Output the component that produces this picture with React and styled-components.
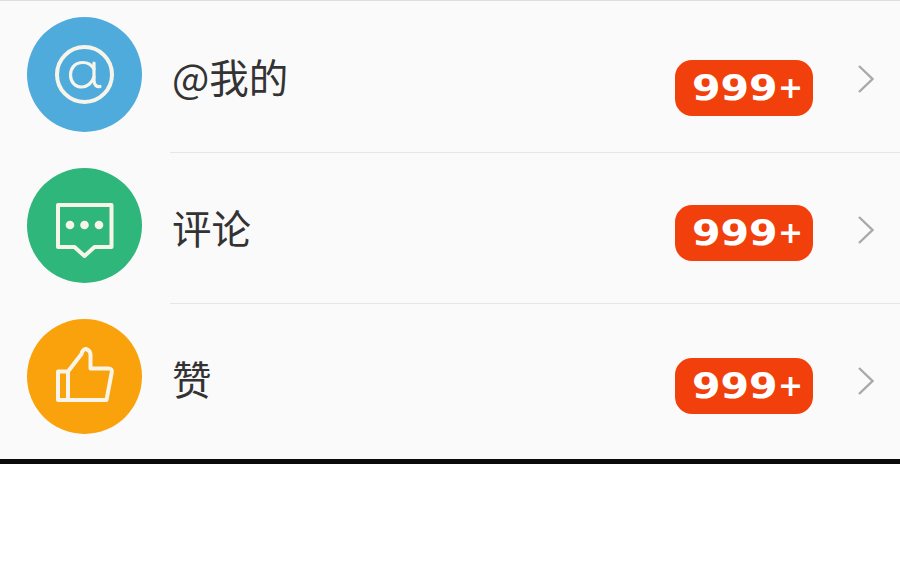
import React from 'react';
import styled, { createGlobalStyle } from 'styled-components';

const GlobalStyle = createGlobalStyle`
  html, body {
    margin: 0;
    padding: 0;
    background: #fff;
  }
`;

const Panel = styled.div`
  width: 900px;
  height: 464px;
  box-sizing: border-box;
  padding-top: 1px;
  background: #fafafa;
  border-top: 1px solid #dedede;
  border-bottom: 5px solid #0a0a0a;
  overflow: hidden;
`;

const Row = styled.div`
  display: flex;
  padding-left: 27px;
`;

const Circle = styled.div`
  flex: none;
  width: 115px;
  height: 115px;
  margin: 15px 0 21px;
  border-radius: 50%;
  background: ${(p) => p.$color};
  color: #f7f5ea;
`;

const Body = styled.div`
  flex: 1;
  display: flex;
  align-items: center;
  margin-left: 28px;
  padding: 3px 26px 0 2px;
  border-bottom: 1px solid ${(p) => (p.$last ? 'transparent' : '#e6e6e4')};
`;

const Label = styled.div`
  flex: 1;
  margin-bottom: 6px;
  font-family: "Noto Sans CJK SC", "Noto Sans", sans-serif;
  font-size: 39.5px;
  font-weight: 400;
  line-height: 50px;
  color: #333;
`;

const Badge = styled.div`
  display: flex;
  align-items: center;
  justify-content: center;
  box-sizing: border-box;
  width: 138px;
  height: 56px;
  margin: ${(p) => p.$drop}px 45px 0 0;
  padding-left: 7px;
  border-radius: 17px;
  background: #f2400c;
  color: #fff;
  font-family: "DejaVu Sans", sans-serif;
  font-weight: 700;
  font-size: 36px;
  line-height: 56px;
`;

const Digits = styled.span`
  display: inline-block;
  width: 85px;
  transform: scaleX(1.14);
  transform-origin: left center;
`;

const Plus = styled.span`
  font-size: 30px;
  margin-left: 1px;
`;

const IconSvg = styled.svg`
  display: block;
  width: 115px;
  height: 115px;
  fill: none;
  stroke: currentColor;
  stroke-width: 4;
  stroke-linejoin: round;
  stroke-linecap: round;
`;

const Chevron = styled.svg`
  display: block;
  flex: none;
  width: 16px;
  height: 28px;
  fill: none;
  stroke: #a9a9a9;
  stroke-width: 2.4;
`;

const AtIcon = () => (
  <IconSvg viewBox="0 0 115 115">
    <circle cx="57.5" cy="57.5" r="27.5" />
    <path d="M67 52C64 47 60 45.5 56 45.5C48 45.5 43.5 51 43.5 58C43.5 65 48 70 55 70C60 70 65 66 67 60" strokeWidth="3.2" />
    <path d="M67 46V63C67 68 70 70.5 73 69.5" strokeWidth="3.2" />
  </IconSvg>
);

const CommentIcon = () => (
  <IconSvg viewBox="0 0 115 115">
    <path d="M31 37H84.5V79H67.5L57.5 88L47.5 79H31Z" />
    <circle cx="43" cy="57" r="4.3" fill="currentColor" stroke="none" />
    <circle cx="57.5" cy="57" r="4.3" fill="currentColor" stroke="none" />
    <circle cx="72" cy="57" r="4.3" fill="currentColor" stroke="none" />
  </IconSvg>
);

const ThumbIcon = () => (
  <IconSvg viewBox="0 0 115 115">
    <path d="M41 52.5H31V81H41Z" />
    <path d="M41 52.5L54.5 35C55.5 31 57.5 29.5 59 30C62 31 63.5 33 63.5 36V49.5H81.5C84 49.5 85.2 51 84.8 53L79.5 81H41Z" />
  </IconSvg>
);

const items = [
  { label: '@我的', color: '#4fabdb', icon: <AtIcon />, drop: 18 },
  { label: '评论', color: '#2fb67a', icon: <CommentIcon />, drop: 6 },
  { label: '赞', color: '#f9a20c', icon: <ThumbIcon />, drop: 10 },
];

function App() {
  return (
    <>
      <GlobalStyle />
      <Panel>
        {items.map((item, i) => (
          <Row key={item.label}>
            <Circle $color={item.color}>{item.icon}</Circle>
            <Body $last={i === items.length - 1}>
              <Label>{item.label}</Label>
              <Badge $drop={item.drop}>
                <Digits>999</Digits>
                <Plus>+</Plus>
              </Badge>
              <Chevron viewBox="0 0 16 28">
                <path d="M1 1L14.5 14L1 27" />
              </Chevron>
            </Body>
          </Row>
        ))}
      </Panel>
    </>
  );
}

export default App;
